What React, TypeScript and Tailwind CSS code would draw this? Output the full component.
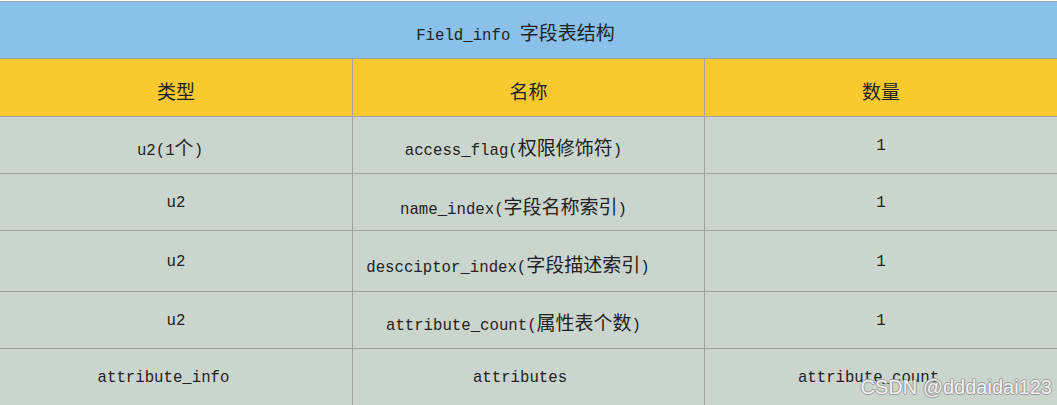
import React from 'react';

// mixed text: latin in a mono face, CJK runs slightly larger like SimSun
function Txt({ text }: { text: string }) {
  const parts = text.split(/([\u3000-\u9fff]+)/).filter(Boolean);
  return (
    <span className="whitespace-pre leading-none">
      {parts.map((p, i) =>
        /[\u3000-\u9fff]/.test(p) ? (
          <span key={i} className="text-[19px] font-['Noto_Sans_CJK_SC',sans-serif]">
            {p}
          </span>
        ) : (
          <span key={i} className="text-[15.7px] font-['Liberation_Mono','Noto_Sans_CJK_SC',monospace]">
            {p}
          </span>
        )
      )}
    </span>
  );
}

interface Cell {
  text: string;
  cls: string;
}

interface Row {
  h: string;
  cells: Cell[];
}

const rows: Row[] = [
  {
    h: 'h-[57px]',
    cells: [
      { text: 'u2(1个)', cls: 'pt-[7px] pr-[12px]' },
      { text: 'access_flag(权限修饰符)', cls: 'pt-[7px] pr-[30px]' },
      { text: '1', cls: 'pt-0' },
    ],
  },
  {
    h: 'h-[57px]',
    cells: [
      { text: 'u2', cls: 'pt-0' },
      { text: 'name_index(字段名称索引)', cls: 'pt-[11px] pr-[30px]' },
      { text: '1', cls: 'pt-0' },
    ],
  },
  {
    h: 'h-[61px]',
    cells: [
      { text: 'u2', cls: 'pt-0' },
      { text: 'descciptor_index(字段描述索引)', cls: 'pt-[9px] pr-[41px]' },
      { text: '1', cls: 'pt-0' },
    ],
  },
  {
    h: 'h-[57px]',
    cells: [
      { text: 'u2', cls: 'pt-0' },
      { text: 'attribute_count(属性表个数)', cls: 'pt-[7px] pr-[30px]' },
      { text: '1', cls: 'pt-0' },
    ],
  },
  {
    h: 'h-[57px]',
    cells: [
      { text: 'attribute_info', cls: 'pt-0 pr-[25px]' },
      { text: 'attributes', cls: 'pt-0 pr-[17px]' },
      { text: 'attribute_count', cls: 'pt-0 pr-[25px]' },
    ],
  },
];

export default function App() {
  return (
    <div className="relative w-[1057px] h-[405px] overflow-hidden bg-white text-[#222]">
      <div className="mt-px border-t border-[#a3a3a3]">
        {/* title */}
        <div className="h-[57px] bg-[#89c1ea] border-b border-[#a3a3a3] flex items-center justify-center pt-[7px] pr-[26px]">
          <Txt text="Field_info 字段表结构" />
        </div>

        {/* header */}
        <div className="grid grid-cols-[352px_352px_353px] h-[58px] bg-[#f8ca30] border-b border-[#a3a3a3]">
          <div className="flex items-center justify-center pt-[6px]">
            <Txt text="类型" />
          </div>
          <div className="flex items-center justify-center pt-[6px] border-l border-[#a3a3a3]">
            <Txt text="名称" />
          </div>
          <div className="flex items-center justify-center pt-[6px] border-l border-[#a3a3a3]">
            <Txt text="数量" />
          </div>
        </div>

        {rows.map((r, i) => (
          <div
            key={i}
            className={`grid grid-cols-[352px_352px_353px] ${r.h} bg-[#cad5cd] border-b border-[#a3a3a3]`}
          >
            {r.cells.map((c, j) => (
              <div
                key={j}
                className={`flex items-center justify-center ${c.cls} ${j > 0 ? 'border-l border-[#a3a3a3]' : ''}`}
              >
                <Txt text={c.text} />
              </div>
            ))}
          </div>
        ))}
      </div>

      {/* watermark */}
      <div className="absolute right-[5px] top-[377px] text-[20px] leading-none font-['Liberation_Sans',Arial,sans-serif] text-[#f2f2f2] [text-shadow:1px_0_0_#9a9a9a,-1px_0_0_#9a9a9a,0_1px_0_#9a9a9a,0_-1px_0_#9a9a9a]">
        CSDN @dddaidai123
      </div>
    </div>
  );
}
